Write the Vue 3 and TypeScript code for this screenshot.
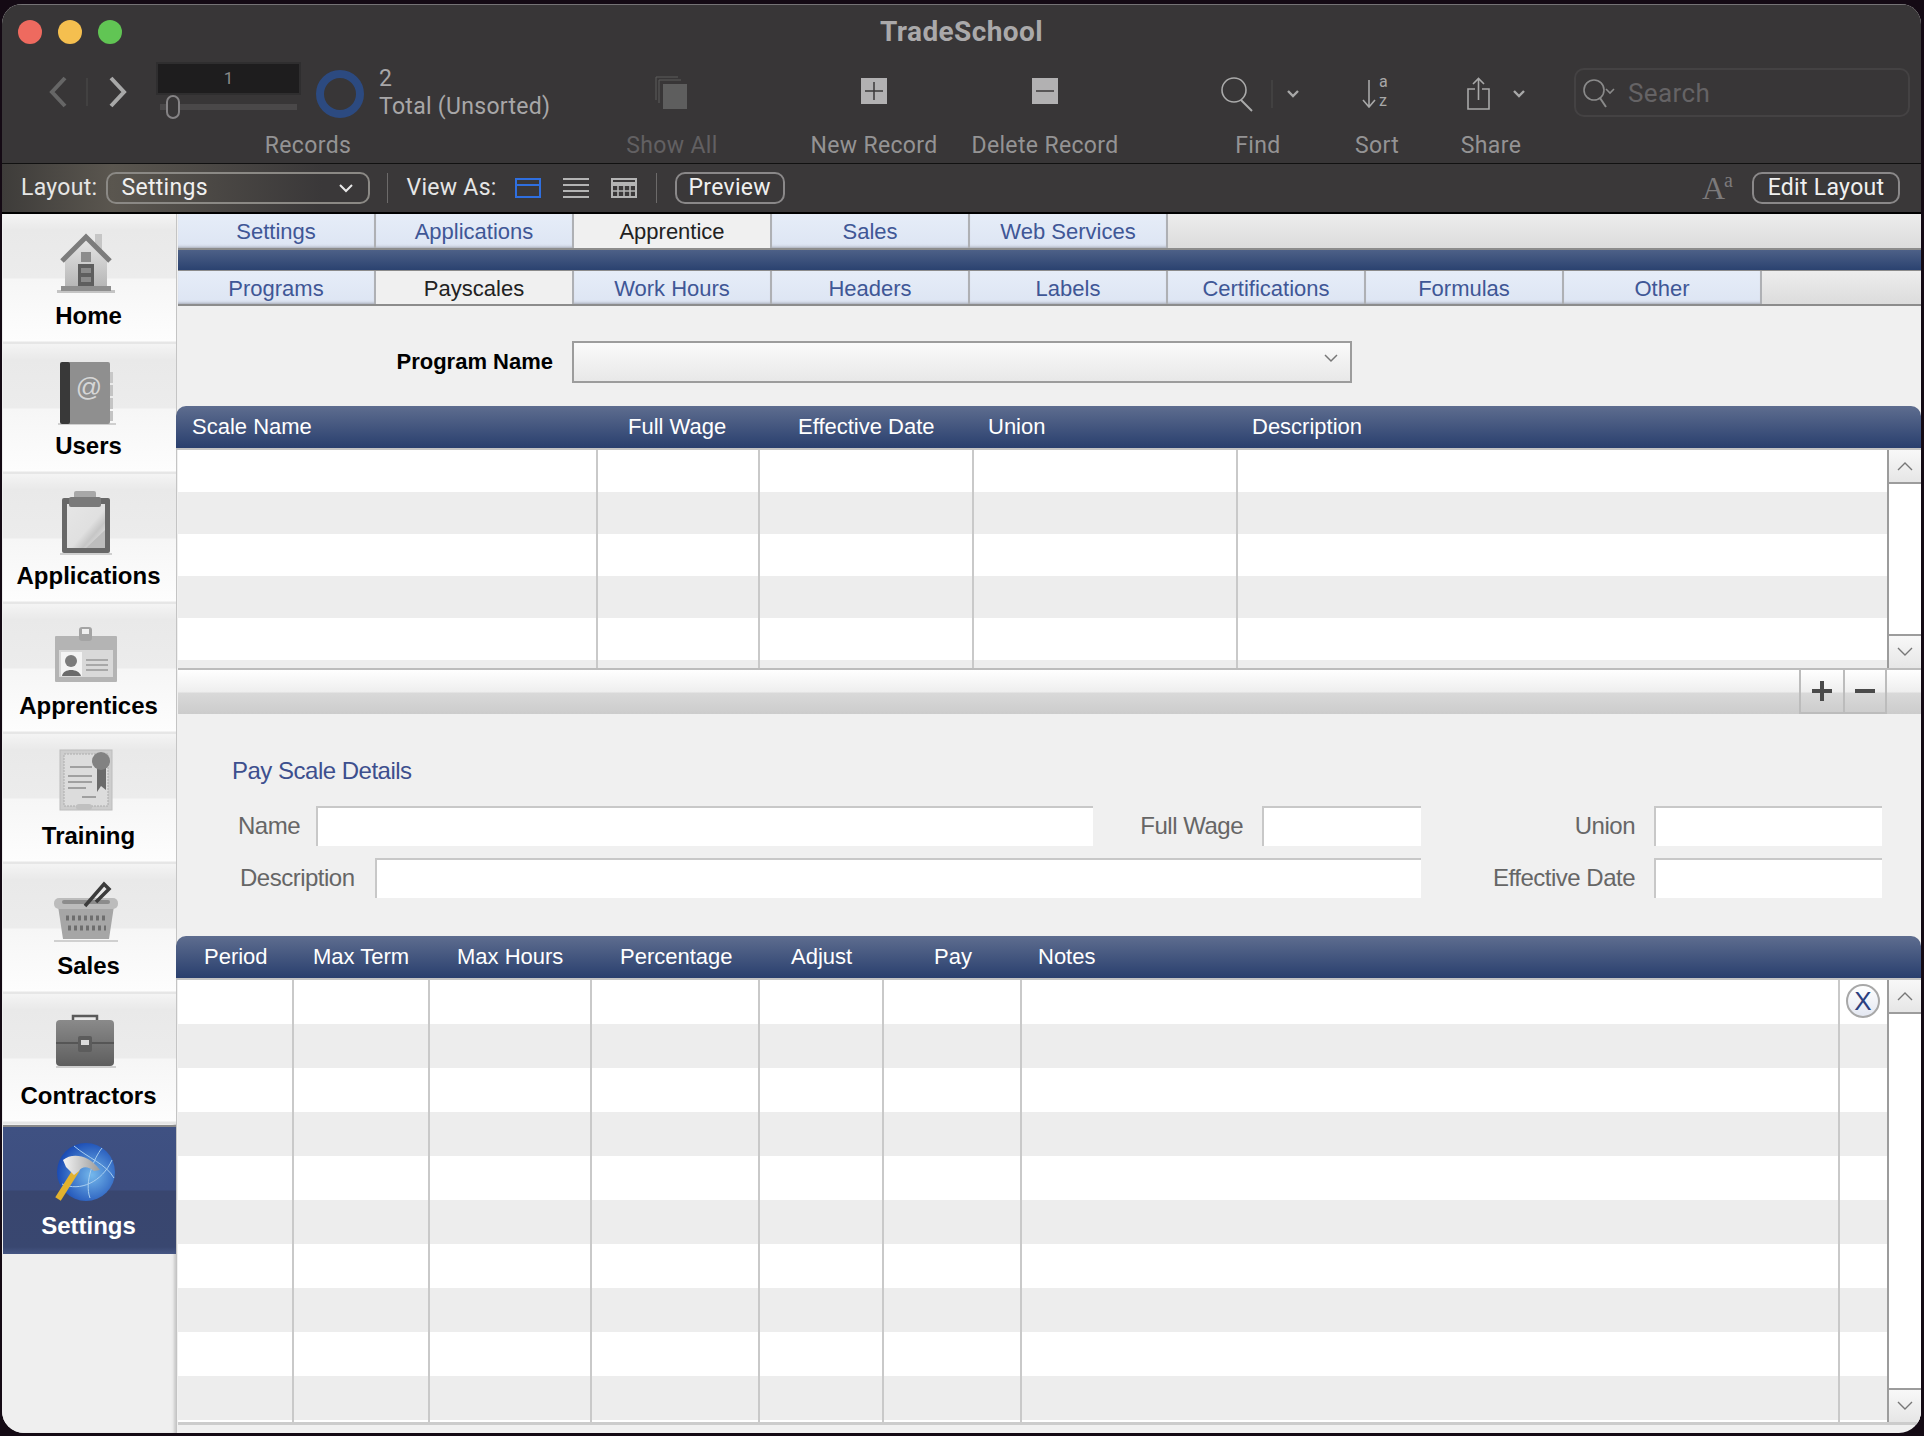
<template>
  <div class="window">
    <header class="chrome">
      <div class="titlebar">
        <div class="lights">
          <span class="light red"></span>
          <span class="light yellow"></span>
          <span class="light green"></span>
        </div>
        <div class="title">TradeSchool</div>
        <div></div>
      </div>

      <div class="toolbar">
        <div class="tool tool-records">
          <div class="tool-icon records-row">
            <div class="nav">
              <svg width="116" height="40" viewBox="0 0 116 40" fill="none">
                <path d="M25 6 L12 20 L25 34" stroke="#666" stroke-width="4" />
                <path d="M47 6 V34" stroke="#4c4c4c" stroke-width="1" />
                <path d="M71 6 L84 20 L71 34" stroke="#a8a8a8" stroke-width="4" />
              </svg>
            </div>
            <div class="record-box">
              <div class="record-field">1</div>
              <div class="slider"><span class="thumb"></span></div>
            </div>
            <span class="ring"></span>
            <div class="record-count">
              <div>2</div>
              <div>Total (Unsorted)</div>
            </div>
          </div>
          <div class="tool-label">Records</div>
        </div>

        <div class="tool tool-show">
          <div class="tool-icon">
            <svg class="show-icon" width="34" height="34" viewBox="0 0 34 34" fill="none">
              <path d="M1 24 V1 H23" stroke="#5c5c5c" stroke-width="1" />
              <path d="M4 27 V4 H26" stroke="#5c5c5c" stroke-width="1" />
              <rect x="8" y="8" width="24" height="25" fill="#5e5e5e" />
            </svg>
          </div>
          <div class="tool-label dim">Show All</div>
        </div>

        <div class="tool tool-new">
          <div class="tool-icon">
            <svg class="square-icon" width="26" height="26" viewBox="0 0 26 26">
              <rect width="26" height="26" fill="#b2b1b2" />
              <path d="M13 4 V22 M4 13 H22" stroke="#3a3839" stroke-width="1.5" />
            </svg>
          </div>
          <div class="tool-label">New Record</div>
        </div>

        <div class="tool tool-del">
          <div class="tool-icon">
            <svg class="square-icon" width="26" height="26" viewBox="0 0 26 26">
              <rect width="26" height="26" fill="#b2b1b2" />
              <path d="M4 13 H22" stroke="#3a3839" stroke-width="1.5" />
            </svg>
          </div>
          <div class="tool-label">Delete Record</div>
        </div>

        <div class="tool tool-find">
          <div class="tool-icon">
            <svg width="82" height="36" viewBox="0 0 82 36" fill="none">
              <circle cx="17" cy="14" r="12" stroke="#aaa" stroke-width="1.6" />
              <path d="M24 24 L35 35" stroke="#aaa" stroke-width="2" />
              <path d="M55 4 V32" stroke="#4c4c4c" stroke-width="1" />
              <path d="M71 15 L76 20 L81 15" stroke="#a8a8a8" stroke-width="2.4" />
            </svg>
          </div>
          <div class="tool-label">Find</div>
        </div>

        <div class="tool tool-sort">
          <div class="tool-icon">
            <svg width="32" height="44" viewBox="0 0 32 44" fill="none">
              <path d="M8 8 V34 M2 28 L8 35 L14 28" stroke="#a8a8a8" stroke-width="1.6" />
              <text x="18" y="15" class="sort-text">a</text>
              <text x="18" y="34" class="sort-text">z</text>
            </svg>
          </div>
          <div class="tool-label">Sort</div>
        </div>

        <div class="tool tool-share">
          <div class="tool-icon">
            <svg width="72" height="34" viewBox="0 0 72 34" fill="none">
              <path d="M20 12 H13 V32 H34 V12 H27" stroke="#a8a8a8" stroke-width="1.6" />
              <path d="M23.5 23 V2 M18 7 L23.5 1.5 L29 7" stroke="#a8a8a8" stroke-width="1.6" />
              <path d="M59 14 L64 19 L69 14" stroke="#a8a8a8" stroke-width="2.4" />
            </svg>
          </div>
          <div class="tool-label">Share</div>
        </div>

        <div class="search">
          <svg width="36" height="32" viewBox="0 0 36 32" fill="none">
            <circle cx="11" cy="13" r="10" stroke="#8a8a8a" stroke-width="1.6" />
            <path d="M17 21 L23 30" stroke="#8a8a8a" stroke-width="2" />
            <path d="M23 12 L27 16 L31 12" stroke="#8a8a8a" stroke-width="1.6" />
          </svg>
          <span>Search</span>
        </div>
      </div>

      <div class="layoutbar">
        <span class="bar-label">Layout:</span>
        <div class="popup">
          <span>Settings</span>
          <svg width="14" height="10" viewBox="0 0 14 10" fill="none">
            <path d="M1 2 L7 8 L13 2" stroke="#e8e8e8" stroke-width="2" />
          </svg>
        </div>
        <span class="bar-sep"></span>
        <span class="bar-label view-label">View As:</span>
        <svg class="view-icon" width="26" height="20" viewBox="0 0 26 20" fill="none">
          <rect x="1" y="1" width="24" height="18" stroke="#2f6fe0" stroke-width="2" />
          <path d="M1 7 H25" stroke="#2f6fe0" stroke-width="2" />
        </svg>
        <svg class="view-icon" width="26" height="20" viewBox="0 0 26 20" fill="none">
          <path d="M0 1 H26 M0 7 H26 M0 13 H26 M0 19 H26" stroke="#b4b4b4" stroke-width="2" />
        </svg>
        <svg class="view-icon" width="26" height="20" viewBox="0 0 26 20" fill="none">
          <rect x="1" y="1" width="24" height="18" stroke="#b4b4b4" stroke-width="2" />
          <path d="M1 6 H25" stroke="#b4b4b4" stroke-width="4" />
          <path d="M1 13 H25 M7 8 V19 M13 8 V19 M19 8 V19" stroke="#b4b4b4" stroke-width="1.6" />
        </svg>
        <span class="bar-sep sep-two"></span>
        <button class="pill preview">Preview</button>
        <span class="font-a">A<sup>a</sup></span>
        <button class="pill edit">Edit Layout</button>
      </div>
    </header>

    <div class="body">
      <nav class="sidebar">
        <div
          v-for="item in navItems"
          :key="item"
          class="nav-item"
          :class="{ active: item === 'Settings' }"
        >
          <svg class="nav-icon" width="72" height="72" viewBox="0 0 72 72">
            <g v-if="item === 'Home'">
              <rect x="5" y="64" width="58" height="3" fill="#c4c4c4" />
              <rect x="43" y="8" width="7" height="16" fill="#c6c6c6" />
              <polygon points="13,33 34,13 55,33 55,63 13,63" fill="url(#wallGrad)" />
              <path d="M10 35 L34 11 L58 35" fill="none" stroke="#7c7c7c" stroke-width="5" />
              <rect x="29" y="26" width="10" height="10" fill="#8c8c8c" />
              <rect x="26" y="38" width="16" height="25" fill="#5e5e5e" />
              <rect x="29" y="42" width="10" height="5" fill="#8a8a8a" />
              <rect x="29" y="51" width="10" height="5" fill="#8a8a8a" />
              <rect x="9" y="60" width="50" height="5" fill="#8e8e8e" />
            </g>
            <g v-else-if="item === 'Users'">
              <rect x="6" y="67" width="58" height="2" fill="#cfcfcf" />
              <rect x="57" y="16" width="4" height="11" fill="#c8c8c8" />
              <rect x="57" y="29" width="4" height="11" fill="#c4c4c4" />
              <rect x="57" y="42" width="4" height="11" fill="#c4c4c4" />
              <rect x="57" y="55" width="4" height="10" fill="#c4c4c4" />
              <rect x="12" y="6" width="46" height="62" rx="2" fill="#8f8f8f" />
              <rect x="8" y="6" width="10" height="62" rx="2" fill="#393939" />
              <text x="37" y="40" class="at-sign">@</text>
            </g>
            <g v-else-if="item === 'Applications'">
              <rect x="8" y="67" width="52" height="2" fill="#cfcfcf" />
              <rect x="10" y="12" width="48" height="55" rx="2" fill="#686868" />
              <rect x="15" y="18" width="38" height="44" fill="url(#paperGrad)" />
              <polygon points="53,44 53,62 34,62" fill="#bdbdbd" />
              <rect x="22" y="5" width="22" height="8" rx="2" fill="#a8a8a8" />
              <rect x="17" y="11" width="32" height="10" rx="2" fill="#7a7a7a" />
            </g>
            <g v-else-if="item === 'Apprentices'">
              <rect x="3" y="20" width="62" height="46" rx="1" fill="#b4b4b4" />
              <rect x="7" y="34" width="54" height="27" fill="#d9d9d9" />
              <rect x="9" y="36" width="21" height="24" fill="#f4f4f4" />
              <circle cx="19" cy="45" r="6" fill="#7c7c7c" />
              <path d="M10 60 C11 52 27 52 29 60 Z" fill="#6a6a6a" />
              <path d="M34 44 H56 M34 49 H56 M34 54 H56" stroke="#a8a8a8" stroke-width="2" />
              <rect x="27" y="11" width="13" height="14" rx="3" fill="#a4a4a4" />
              <rect x="30" y="13" width="7" height="5" fill="#f0f0f0" />
            </g>
            <g v-else-if="item === 'Training'">
              <rect x="8" y="4" width="52" height="60" fill="#cdcdcd" stroke="#bcbcbc" />
              <rect x="12" y="8" width="44" height="52" fill="#dcdcdc" stroke="#acacac" stroke-dasharray="2 1" />
              <path d="M18 21 H40 M16 30 H40 M16 36 H40 M16 42 H34 M30 51 H44" stroke="#a0a0a0" stroke-width="2" />
              <polygon points="45,22 54,22 54,44 49,40 45,46" fill="#6a6a6a" />
              <circle cx="49" cy="15" r="9" fill="#828282" />
              <rect x="24" y="58" width="16" height="6" rx="3" fill="#c0c0c0" />
            </g>
            <g v-else-if="item === 'Sales'">
              <rect x="2" y="64" width="64" height="2" fill="#d0d0d0" />
              <polygon points="6,30 62,30 57,63 11,63" fill="#a6a6a6" />
              <rect x="2" y="22" width="64" height="11" rx="5" fill="#bcbcbc" />
              <rect x="10" y="24" width="48" height="4" rx="2" fill="#8c8c8c" />
              <path d="M14 42 H56 M16 52 H54" stroke="#6e6e6e" stroke-width="5" stroke-dasharray="3 3" />
              <path d="M33 30 L52 8 L57 13 L44 26" fill="none" stroke="#3c3c3c" stroke-width="3.5" />
            </g>
            <g v-else-if="item === 'Contractors'">
              <rect x="4" y="60" width="60" height="2" fill="#cfcfcf" />
              <path d="M21 15 V10 H45 V15" fill="none" stroke="#5a5a5a" stroke-width="2.5" />
              <rect x="4" y="14" width="58" height="46" rx="4" fill="url(#caseGrad)" />
              <path d="M4 37 H62" stroke="#4c4c4c" stroke-width="1.5" />
              <rect x="26" y="30" width="14" height="16" rx="2" fill="#5c5c5c" />
              <rect x="29" y="34" width="8" height="5" fill="#dcdcdc" />
            </g>
            <g v-else>
              <circle cx="34" cy="36" r="29" fill="url(#globeGrad)" />
              <path d="M10 48 C28 56 50 46 60 24 M22 10 C36 22 54 28 62 42 M38 62 C32 46 42 22 50 12" fill="none" stroke="#a9cff0" stroke-width="1" />
              <path d="M6 63 L25 33" stroke="#e2b22e" stroke-width="6.5" />
              <path d="M11 24 C20 17 36 18 48 34 L42 35 C36 30 30 30 27 35 L22 39 L14 31 Z" fill="url(#headGrad)" />
            </g>
          </svg>
          <div class="nav-label">{{ item }}</div>
        </div>
        <svg class="defs" width="0" height="0">
          <defs>
            <linearGradient id="wallGrad" x1="0" y1="0" x2="0" y2="1">
              <stop offset="0" stop-color="#e6e6e6" />
              <stop offset="1" stop-color="#b4b4b4" />
            </linearGradient>
            <linearGradient id="paperGrad" x1="0" y1="0" x2="1" y2="1">
              <stop offset="0" stop-color="#e6e6e6" />
              <stop offset="0.55" stop-color="#e0e0e0" />
              <stop offset="0.7" stop-color="#c6c6c6" />
              <stop offset="1" stop-color="#f4f4f4" />
            </linearGradient>
            <linearGradient id="caseGrad" x1="0" y1="0" x2="0" y2="1">
              <stop offset="0" stop-color="#8a8a8a" />
              <stop offset="1" stop-color="#5e5e5e" />
            </linearGradient>
            <radialGradient id="globeGrad" cx="0.6" cy="0.55" r="0.6">
              <stop offset="0" stop-color="#74b8ec" />
              <stop offset="1" stop-color="#1a4bb4" />
            </radialGradient>
            <linearGradient id="headGrad" x1="0" y1="0" x2="1" y2="0">
              <stop offset="0" stop-color="#f4f4f4" />
              <stop offset="1" stop-color="#9a9a9a" />
            </linearGradient>
          </defs>
        </svg>
      </nav>

      <main class="main">
        <div class="tabs tabs-top">
          <div
            v-for="tab in topTabs"
            :key="tab"
            class="tab"
            :class="{ current: tab === 'Apprentice' }"
          >{{ tab }}</div>
        </div>
        <div class="blue-bar"></div>
        <div class="tabs">
          <div
            v-for="tab in subTabs"
            :key="tab"
            class="tab"
            :class="{ current: tab === 'Payscales' }"
          >{{ tab }}</div>
        </div>

        <div class="program-row">
          <label class="program-label">Program Name</label>
          <div class="program-select">
            <svg width="14" height="9" viewBox="0 0 14 9" fill="none">
              <path d="M1 1 L7 7 L13 1" stroke="#777" stroke-width="1.5" />
            </svg>
          </div>
        </div>

        <div class="grid-head scale-head">
          <span v-for="col in scaleCols" :key="col">{{ col }}</span>
        </div>
        <div class="grid-body scale-body">
          <div class="rows">
            <div v-for="n in 6" :key="n" class="row scale-row">
              <span v-for="c in 5" :key="c" class="cell"></span>
            </div>
          </div>
          <div class="scroll">
            <div class="scroll-btn up">
              <svg width="16" height="10" viewBox="0 0 16 10" fill="none">
                <path d="M1 9 L8 2 L15 9" stroke="#777" stroke-width="1.4" />
              </svg>
            </div>
            <div class="scroll-track"></div>
            <div class="scroll-btn down">
              <svg width="16" height="10" viewBox="0 0 16 10" fill="none">
                <path d="M1 1 L8 8 L15 1" stroke="#777" stroke-width="1.4" />
              </svg>
            </div>
          </div>
        </div>
        <div class="portal-foot">
          <div class="foot-btn">
            <svg width="20" height="20" viewBox="0 0 20 20">
              <path d="M10 0 V20 M0 10 H20" stroke="#4a4a4a" stroke-width="4" />
            </svg>
          </div>
          <div class="foot-btn">
            <svg width="20" height="20" viewBox="0 0 20 20">
              <path d="M0 10 H20" stroke="#4a4a4a" stroke-width="4" />
            </svg>
          </div>
        </div>

        <section class="details">
          <h3 class="details-title">Pay Scale Details</h3>
          <div class="fields fields-one">
            <label class="f-label">Name</label>
            <div class="f-input"></div>
            <label class="f-label end">Full Wage</label>
            <div class="f-input"></div>
            <label class="f-label end">Union</label>
            <div class="f-input"></div>
          </div>
          <div class="fields fields-two">
            <label class="f-label">Description</label>
            <div class="f-input"></div>
            <label class="f-label end">Effective Date</label>
            <div class="f-input"></div>
          </div>
        </section>

        <div class="grid-head period-head">
          <span v-for="col in periodCols" :key="col">{{ col }}</span>
        </div>
        <div class="grid-body period-body">
          <div class="rows">
            <div v-for="n in 11" :key="n" class="row period-row">
              <span v-for="c in 8" :key="c" class="cell"></span>
            </div>
            <button class="clear-btn">X</button>
          </div>
          <div class="scroll">
            <div class="scroll-btn up">
              <svg width="16" height="10" viewBox="0 0 16 10" fill="none">
                <path d="M1 9 L8 2 L15 9" stroke="#777" stroke-width="1.4" />
              </svg>
            </div>
            <div class="scroll-track"></div>
            <div class="scroll-btn down">
              <svg width="16" height="10" viewBox="0 0 16 10" fill="none">
                <path d="M1 1 L8 8 L15 1" stroke="#777" stroke-width="1.4" />
              </svg>
            </div>
          </div>
        </div>
        <div class="bottom-line"></div>
      </main>
    </div>
  </div>
</template>

<script setup lang="ts">
const navItems: string[] = [
  'Home',
  'Users',
  'Applications',
  'Apprentices',
  'Training',
  'Sales',
  'Contractors',
  'Settings'
]

const topTabs: string[] = ['Settings', 'Applications', 'Apprentice', 'Sales', 'Web Services']

const subTabs: string[] = [
  'Programs',
  'Payscales',
  'Work Hours',
  'Headers',
  'Labels',
  'Certifications',
  'Formulas',
  'Other'
]

const scaleCols: string[] = ['Scale Name', 'Full Wage', 'Effective Date', 'Union', 'Description']

const periodCols: string[] = ['Period', 'Max Term', 'Max Hours', 'Percentage', 'Adjust', 'Pay', 'Notes']
</script>

<style>
html,
body {
  margin: 0;
  background: #140a14;
}
</style>

<style scoped>
* {
  box-sizing: border-box;
}

.window {
  width: 1919px;
  height: 1429px;
  margin: 4px 0 0 2px;
  border-radius: 20px 20px 22px 22px;
  overflow: hidden;
  background: #f0f0f0;
  font-family: "Liberation Sans", Arial, sans-serif;
}

/* toolbar */
.chrome {
  background: #383637;
  border-top: 1px solid #757375;
  font-family: Roboto, "Liberation Sans", sans-serif;
}

.titlebar {
  display: grid;
  grid-template-columns: 1fr auto 1fr;
  align-items: center;
  height: 54px;
}

.lights {
  display: flex;
  gap: 16px;
  padding-left: 16px;
}

.light {
  width: 24px;
  height: 24px;
  border-radius: 50%;
}

.red {
  background: #ee6a5f;
}

.yellow {
  background: #f5bf4f;
}

.green {
  background: #61c554;
}

.title {
  margin-bottom: 2px;
  font-size: 28px;
  font-weight: 700;
  letter-spacing: 0.4px;
  color: #aaa9aa;
}

.toolbar {
  display: flex;
  height: 105px;
  border-bottom: 1px solid #111;
  padding-left: 38px;
}

.tool {
  display: flex;
  flex-direction: column;
  align-items: center;
  flex: none;
}

.tool-icon {
  height: 71px;
  padding-bottom: 2px;
  display: flex;
  align-items: center;
  justify-content: center;
}

.tool-label {
  font-size: 23px;
  line-height: 32px;
  color: #949394;
  white-space: nowrap;
  letter-spacing: 0.35px;
}

.tool-label.dim {
  color: #626062;
}

.tool-records {
  width: 536px;
}

.tool-show {
  width: 192px;
}

.tool-new {
  width: 212px;
}

.tool-del {
  width: 130px;
}

.tool-find {
  width: 156px;
  margin-left: 70px;
}

.tool-sort {
  width: 82px;
}

.tool-share {
  width: 146px;
}

.show-icon {
  margin-top: -2px;
}

.square-icon {
  margin-top: -6px;
}

.sort-text {
  font-size: 16px;
  fill: #a8a8a8;
  font-family: Roboto, sans-serif;
}

.records-row {
  align-self: stretch;
  justify-content: flex-start;
}

.nav {
  width: 116px;
  flex: none;
}

.record-box {
  width: 145px;
  flex: none;
  align-self: flex-start;
  margin-top: 3px;
}

.record-field {
  height: 33px;
  background: #1e1d1e;
  border: 2px solid #2f2e2f;
  color: #8a8a8a;
  font-size: 17px;
  line-height: 29px;
  text-align: center;
}

.slider {
  position: relative;
  height: 6px;
  margin: 9px 4px 0;
  background: #4a4849;
}

.thumb {
  position: absolute;
  left: 6px;
  top: -9px;
  width: 14px;
  height: 24px;
  border: 2px solid #858385;
  border-radius: 7px;
  background: #383637;
}

.ring {
  width: 48px;
  height: 48px;
  margin: 0 15px;
  flex: none;
  border: 8px solid #2c4a80;
  border-radius: 50%;
}

.record-count {
  margin-top: -2px;
  font-size: 23px;
  line-height: 28px;
  color: #a8a7a8;
  white-space: nowrap;
  letter-spacing: 0.3px;
}

.search {
  display: flex;
  align-items: center;
  gap: 9px;
  width: 336px;
  height: 49px;
  margin: 9px 0 0 10px;
  padding-left: 7px;
  border: 2px solid #444243;
  border-radius: 10px;
  color: #656365;
  font-size: 26px;
  letter-spacing: 0.4px;
}

.layoutbar {
  display: flex;
  align-items: center;
  height: 50px;
  padding: 0 21px 1px 19px;
  border-bottom: 2px solid #000;
  background: linear-gradient(90deg, #3e3c3a 0, #5a564f 110px, #3a3839 320px);
}

.bar-label {
  font-size: 23px;
  color: #e6e6e6;
  letter-spacing: 0.3px;
}

.popup {
  display: flex;
  align-items: center;
  justify-content: space-between;
  width: 264px;
  height: 32px;
  margin-left: 9px;
  padding: 0 15px 0 13px;
  border: 2px solid #8b8985;
  border-radius: 10px;
  color: #f0f0f0;
  font-size: 23px;
  letter-spacing: 0.3px;
}

.bar-sep {
  width: 1px;
  height: 30px;
  margin: 0 18px 0 17px;
  background: #6c6a6a;
}

.view-label {
  margin-right: 18px;
}

.view-icon {
  margin-right: 22px;
}

.sep-two {
  margin: 0 18px 0 -3px;
}

.pill {
  height: 32px;
  padding: 0;
  border: 2px solid #8a8889;
  border-radius: 10px;
  background: transparent;
  color: #f0f0f0;
  font-family: inherit;
  font-size: 23px;
  letter-spacing: 0.3px;
}

.preview {
  width: 110px;
}

.font-a {
  margin-left: auto;
  margin-right: 20px;
  color: #7c7a7b;
  font-size: 32px;
  font-family: "Liberation Serif", serif;
  line-height: 30px;
  font-weight: 400;
  letter-spacing: -1px;
}

.font-a sup {
  font-size: 20px;
  line-height: 0;
}

.edit {
  width: 148px;
}

/* body */
.body {
  display: flex;
  height: 1219px;
}

.sidebar {
  width: 175px;
  flex: none;
  padding-left: 1px;
  background: #efefef;
  box-shadow: inset -3px 0 3px -1px #c8c8c8;
  border-right: 1px solid #c4c4c4;
}

.defs {
  position: absolute;
}

.nav-item {
  height: 130px;
  width: 173px;
  padding: 12px 2px 0 0;
  text-align: center;
  background: linear-gradient(
    180deg,
    #f4f4f4 0,
    #e9e9e9 16px,
    #ececec 64px,
    #f6f6f6 65px,
    #fdfdfd 127px,
    #e6e6e6 128px
  );
}

.nav-item.active {
  margin-top: 1px;
  height: 129px;
  padding-top: 9px;
  background: linear-gradient(180deg, #3f5182 0, #3d4e80 63px, #39466f 64px, #394770 120px, #465684 127px);
  border-top: 2px solid #8a8a8a;
}

.nav-icon {
  display: block;
  margin: 0 0 0 49px;
}

.at-sign {
  font-family: "Liberation Sans", sans-serif;
  font-size: 26px;
  fill: #d6d6d6;
  text-anchor: middle;
}

.nav-label {
  margin-top: 4px;
  font-size: 24px;
  font-weight: 700;
  line-height: 28px;
  color: #000;
}

.active .nav-label {
  color: #fff;
}

.main {
  flex: 1;
  min-width: 0;
  display: flex;
  flex-direction: column;
  padding-left: 1px;
}

.tabs {
  display: flex;
  height: 35px;
  flex: none;
  border-bottom: 2px solid #8c8c8c;
  background: linear-gradient(180deg, #ededed, #dcdcdc);
}

.tabs-top {
  height: 36px;
}

.tab {
  width: 198px;
  text-align: center;
  font-size: 22px;
  line-height: 35px;
  color: #3f5796;
  background: linear-gradient(180deg, #e6edf8, #dde5f3);
  border-right: 2px solid #aeb0b4;
  box-shadow: inset 0 -3px 3px -2px #a4a8b2;
}

.tab.current {
  background: #f0f0f0;
  color: #222;
  box-shadow: none;
}

.blue-bar {
  height: 21px;
  flex: none;
  background: linear-gradient(180deg, #4d6087, #2b4270);
  border-bottom: 1px solid #8c8c8c;
}

.program-row {
  display: flex;
  align-items: flex-start;
  justify-content: flex-end;
  height: 100px;
  flex: none;
  padding: 35px 569px 0 0;
}

.program-label {
  margin-right: 19px;
  font-size: 22px;
  font-weight: 700;
  line-height: 42px;
  color: #000;
}

.program-select {
  display: flex;
  align-items: center;
  justify-content: flex-end;
  width: 780px;
  height: 42px;
  padding: 0 12px 8px 0;
  border: 2px solid #9c9c9c;
  background: linear-gradient(180deg, #fafafa, #e8e8e8);
}

.grid-head {
  display: grid;
  align-items: center;
  flex: none;
  height: 44px;
  margin-left: -2px;
  border-radius: 10px 10px 0 0;
  border-bottom: 2px solid #c4c4c4;
  background: linear-gradient(180deg, #5e6d8f, #293f6e);
  color: #fff;
  font-size: 22px;
}

.scale-head {
  grid-template-columns: 436px 170px 190px 264px 1fr;
  padding-left: 16px;
}

.period-head {
  grid-template-columns: 109px 144px 163px 171px 143px 104px 1fr;
  padding-left: 28px;
}

.grid-body {
  display: flex;
  flex: none;
  background: #fff;
}

.scale-body {
  height: 218px;
}

.period-body {
  height: 442px;
}

.rows {
  position: relative;
  flex: 1;
  min-width: 0;
  overflow: hidden;
}

.row {
  display: grid;
}

.row:nth-child(even) {
  background: #ededed;
}

.scale-row {
  height: 42px;
  grid-template-columns: 420px 162px 214px 264px 1fr;
}

.period-row {
  height: 44px;
  grid-template-columns: 116px 136px 162px 168px 124px 138px 818px 1fr;
}

.cell {
  border-right: 2px solid #c9c9c9;
}

.cell:last-child {
  border-right: 0;
}

.scroll {
  display: flex;
  flex-direction: column;
  width: 34px;
  flex: none;
  border-left: 2px solid #9c9c9c;
}

.scroll-btn {
  display: flex;
  align-items: center;
  justify-content: center;
  flex: none;
  background: linear-gradient(180deg, #f8f8f8, #e6e6e6);
}

.scroll-btn.up {
  height: 34px;
  border-bottom: 2px solid #9c9c9c;
}

.scroll-btn.down {
  height: 34px;
  border-top: 2px solid #9c9c9c;
}

.scroll-track {
  flex: 1;
  background: #fff;
}

.portal-foot {
  display: flex;
  justify-content: flex-end;
  flex: none;
  height: 46px;
  padding-right: 34px;
  border-top: 2px solid #bcbcbc;
  background: linear-gradient(180deg, #ffffff 0, #eeeeee 22px, #d9d9d9 23px, #cccccc 44px);
}

.foot-btn {
  display: flex;
  align-items: center;
  justify-content: center;
  width: 44px;
  border-left: 2px solid #bcbcbc;
  border-bottom: 2px solid #bcbcbc;
}

.foot-btn:last-child {
  border-right: 2px solid #bcbcbc;
}

.details {
  flex: none;
  height: 222px;
  padding-top: 43px;
}

.details-title {
  margin: 0 0 21px 54px;
  font-size: 24px;
  font-weight: 400;
  line-height: 28px;
  letter-spacing: -0.5px;
  color: #3d4f8e;
}

.fields {
  display: grid;
  height: 40px;
  align-items: center;
}

.fields-one {
  padding-left: 60px;
  margin-bottom: 12px;
  grid-template-columns: 78px 777px 169px 159px 233px 228px;
}

.fields-two {
  padding-left: 62px;
  grid-template-columns: 135px 1046px 233px 228px;
}

.f-label {
  font-size: 24px;
  letter-spacing: -0.5px;
  color: #666;
}

.f-label.end {
  text-align: right;
  padding-right: 19px;
}

.f-input {
  height: 40px;
  background: #fff;
  border-top: 2px solid #c8c8c8;
  border-left: 2px solid #c8c8c8;
}

.clear-btn {
  position: absolute;
  top: 4px;
  right: 7px;
  width: 34px;
  height: 34px;
  padding: 0;
  border: 2px solid #a8a8a8;
  border-radius: 50%;
  background: linear-gradient(180deg, #ffffff, #e4e8f2);
  color: #2c4080;
  font-family: inherit;
  font-size: 26px;
  line-height: 28px;
}

.bottom-line {
  flex: none;
  height: 3px;
  background: #cccccc;
}
</style>
